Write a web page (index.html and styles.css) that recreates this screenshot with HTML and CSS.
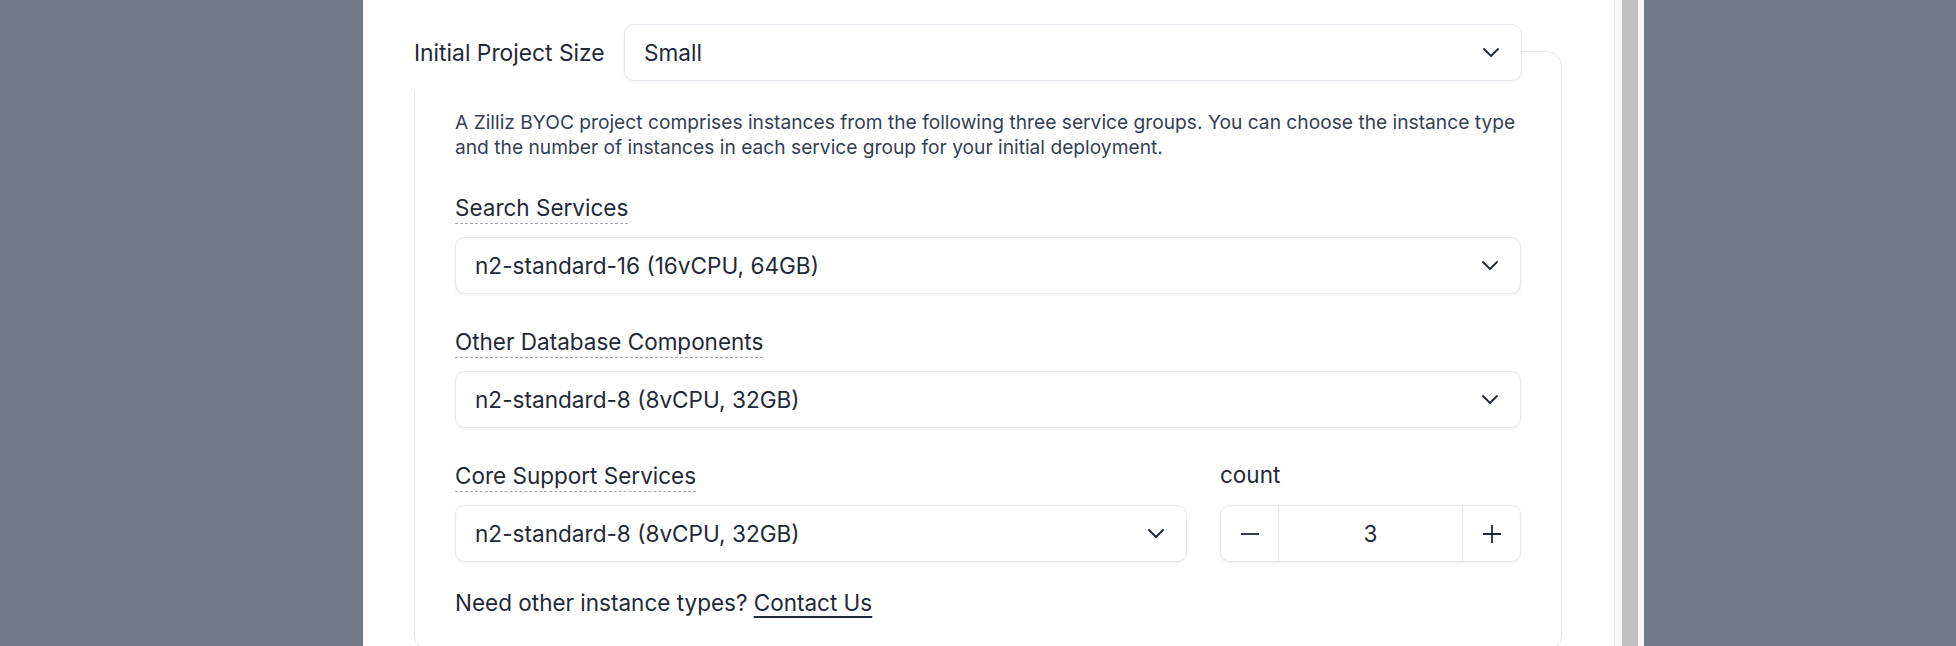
FILE: index.html
```html
<!DOCTYPE html>
<html lang="en">
<head>
<meta charset="utf-8">
<title>BYOC Project Size</title>
<link rel="stylesheet" href="styles.css">
</head>
<body>
<div class="screen">
  <div class="panel">
    <div class="size-row">
      <div class="size-label">Initial Project Size</div>
      <div class="select grow">
        <span class="select-value">Small</span>
        <svg class="chevron" viewBox="0 0 16 9" width="16" height="9"><path d="M1 1 L8 8 L15 1" /></svg>
      </div>
    </div>
    <div class="card">
      <p class="desc">A Zilliz BYOC project comprises instances from the following three service groups. You can choose the instance type and the number of instances in each service group for your initial deployment.</p>

      <div class="field">
        <div class="field-label"><span class="dotted">Search Services</span></div>
        <div class="select">
          <span class="select-value">n2-standard-16 (16vCPU, 64GB)</span>
          <svg class="chevron" viewBox="0 0 16 9" width="16" height="9"><path d="M1 1 L8 8 L15 1" /></svg>
        </div>
      </div>

      <div class="field">
        <div class="field-label"><span class="dotted">Other Database Components</span></div>
        <div class="select">
          <span class="select-value">n2-standard-8 (8vCPU, 32GB)</span>
          <svg class="chevron" viewBox="0 0 16 9" width="16" height="9"><path d="M1 1 L8 8 L15 1" /></svg>
        </div>
      </div>

      <div class="field core-grid">
        <div class="field-label"><span class="dotted">Core Support Services</span></div>
        <div class="field-label">count</div>
        <div class="select">
          <span class="select-value">n2-standard-8 (8vCPU, 32GB)</span>
          <svg class="chevron" viewBox="0 0 16 9" width="16" height="9"><path d="M1 1 L8 8 L15 1" /></svg>
        </div>
        <div class="counter">
          <div class="step minus">
            <svg viewBox="0 0 20 20" width="20" height="20"><path d="M1 10 H19" /></svg>
          </div>
          <div class="count-value">3</div>
          <div class="step plus">
            <svg viewBox="0 0 20 20" width="20" height="20"><path d="M1 10 H19 M10 1 V19" /></svg>
          </div>
        </div>
      </div>

      <p class="need">Need other instance types? <a class="contact" href="#">Contact Us</a></p>
    </div>
  </div>
  <div class="scrollbar"><div class="thumb"></div></div>
</div>
</body>
</html>
```

FILE: styles.css
```css
* { box-sizing: border-box; }

html, body {
  margin: 0;
  padding: 0;
  background: #737a89;
}

body {
  font-family: Inter, "Noto Sans", "Liberation Sans", sans-serif;
  color: #1f2937;
  overflow: hidden;
}

.screen {
  display: flex;
  height: 646px;
  padding-left: 363px;
  background: #737a89;
}

.panel {
  width: 1251px;
  height: 646px;
  background: #ffffff;
  padding: 24px 52px 0 51px;
  overflow: hidden;
}

.scrollbar {
  width: 30px;
  height: 646px;
  background: #f7f7f7;
  border-left: 1px solid #e8e8e8;
  padding-left: 7px;
}

.thumb {
  width: 16px;
  height: 100%;
  background: #c1c1c1;
}

/* Initial project size row */
.size-row {
  position: relative;
  z-index: 1;
  display: flex;
  align-items: center;
  background: #ffffff;
  margin-right: 40px;
  padding-bottom: 10px;
}

.size-label {
  width: 210px;
  flex: none;
  font-size: 22.8px;
  line-height: 28px;
  color: #1f2937;
}

.grow { flex: 1; }

.select {
  height: 57px;
  display: flex;
  align-items: center;
  justify-content: space-between;
  padding: 0 22px 0 19px;
  border: 1px solid #e4e8ef;
  border-radius: 10px;
  background: #ffffff;
  box-shadow: 0 1px 3px rgba(16, 24, 40, 0.07);
}

.select-value {
  font-size: 22.6px;
  line-height: 28px;
  color: #1f2937;
}

.chevron {
  flex: none;
  fill: none;
  stroke: #1f2937;
  stroke-width: 1.8;
  stroke-linecap: round;
  stroke-linejoin: round;
}

/* Card */
.card {
  margin-top: -40px;
  height: 600px;
  border: 1px solid #e4e8ef;
  border-radius: 15px;
  padding: 58px 40px 0 40px;
}

.desc {
  margin: 0 0 1px 0;
  font-size: 19.2px;
  line-height: 25px;
  color: #344054;
}

.field {
  margin-top: 33px;
}

.field-label {
  font-size: 22.5px;
  line-height: 28px;
  color: #1f2937;
  margin-bottom: 13px;
}

.dotted {
  display: inline-block;
  line-height: 30px;
  border-bottom: 1px dashed #a3aab6;
}

.core-grid {
  display: grid;
  grid-template-columns: 1fr 301px;
  column-gap: 33px;
}

.counter {
  height: 57px;
  display: flex;
  border: 1px solid #e4e8ef;
  border-radius: 10px;
  background: #ffffff;
  box-shadow: 0 1px 3px rgba(16, 24, 40, 0.07);
}

.step {
  width: 58px;
  flex: none;
  display: flex;
  align-items: center;
  justify-content: center;
}

.step svg {
  fill: none;
  stroke: #1f2937;
  stroke-width: 1.8;
}

.minus { border-right: 1px solid #e4e8ef; }
.plus { border-left: 1px solid #e4e8ef; }

.count-value {
  flex: 1;
  display: flex;
  align-items: center;
  justify-content: center;
  font-size: 22.5px;
  color: #1f2937;
}

.need {
  margin: 27px 0 0 0;
  font-size: 22.5px;
  line-height: 28px;
  color: #1f2937;
}

.contact {
  color: #1f2937;
  text-decoration: underline;
  text-decoration-thickness: 2px;
  text-underline-offset: 5px;
}
```
